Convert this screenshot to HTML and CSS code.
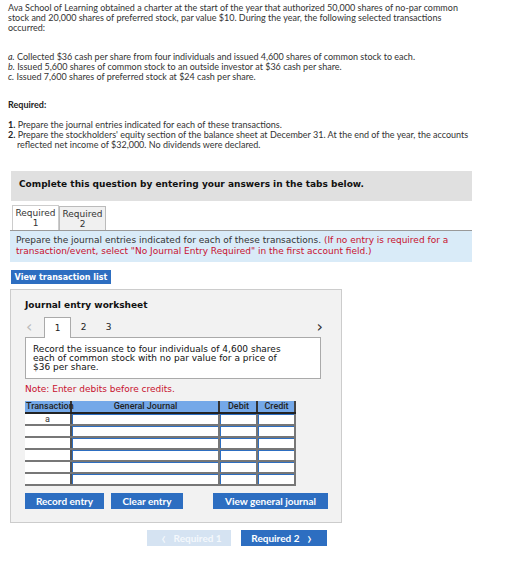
FILE: index.html
```html
<!DOCTYPE html>
<html lang="en">
<head>
  <meta charset="UTF-8" />
  <title>Ava School of Learning - Journal Entries</title>
  <link rel="stylesheet" href="styles.css">
</head>
<body>
  <div class="problem">
    <p>Ava School of Learning obtained a charter at the start of the year that authorized 50,000 shares of no-par common stock and 20,000 shares of preferred stock, par value $10. During the year, the following selected transactions occurred:</p>
    <ol class="events">
      <li><i>a.</i> Collected $36 cash per share from four individuals and issued 4,600 shares of common stock to each.</li>
      <li><i>b.</i> Issued 5,600 shares of common stock to an outside investor at $36 cash per share.</li>
      <li><i>c.</i> Issued 7,600 shares of preferred stock at $24 cash per share.</li>
    </ol>
    <p class="req-title">Required:</p>
    <ol class="reqs">
      <li><b>1.</b> Prepare the journal entries indicated for each of these transactions.</li>
      <li><b>2.</b> Prepare the stockholders' equity section of the balance sheet at December 31. At the end of the year, the accounts reflected net income of $32,000. No dividends were declared.</li>
    </ol>
  </div>

  <div class="answer">
    <div class="banner">Complete this question by entering your answers in the tabs below.</div>

    <div class="tabs">
      <div class="tab active">Required<br>1</div>
      <div class="tab">Required<br>2</div>
    </div>
    <div class="info">
      <div>Prepare the journal entries indicated for each of these transactions. <span class="red">(If no entry is required for a</span></div>
      <div class="red">transaction/event, select "No Journal Entry Required" in the first account field.)</div>
    </div>

    <button class="btn small">View transaction list</button>

    <div class="worksheet">
      <h4>Journal entry worksheet</h4>
      <div class="steps">
        <span class="arrow off">&lsaquo;</span>
        <span class="step current">1</span>
        <span class="step">2</span>
        <span class="step">3</span>
        <span class="arrow next">&rsaquo;</span>
      </div>
      <div class="desc">Record the issuance to four individuals of 4,600 shares each of common stock with no par value for a price of $36 per share.</div>
      <p class="note">Note: Enter debits before credits.</p>

      <table class="journal">
        <thead>
          <tr>
            <th class="c-tr">Transaction</th>
            <th class="c-gj">General Journal</th>
            <th class="c-dr">Debit</th>
            <th class="c-cr">Credit</th>
          </tr>
        </thead>
        <tbody>
          <tr><td class="c-tr">a</td><td class="cell"></td><td class="cell"></td><td class="cell"></td></tr>
          <tr><td class="c-tr"></td><td class="cell"></td><td class="cell"></td><td class="cell"></td></tr>
          <tr><td class="c-tr"></td><td class="cell"></td><td class="cell"></td><td class="cell"></td></tr>
          <tr><td class="c-tr"></td><td class="cell"></td><td class="cell"></td><td class="cell"></td></tr>
          <tr><td class="c-tr"></td><td class="cell"></td><td class="cell"></td><td class="cell"></td></tr>
          <tr><td class="c-tr"></td><td class="cell"></td><td class="cell"></td><td class="cell"></td></tr>
        </tbody>
      </table>

      <div class="actions">
        <button class="btn">Record entry</button>
        <button class="btn">Clear entry</button>
        <button class="btn push">View general journal</button>
      </div>
    </div>

    <div class="pager">
      <button class="btn page disabled"><span class="chev">&lsaquo;</span> Required 1</button>
      <button class="btn page">Required 2 <span class="chev">&rsaquo;</span></button>
    </div>
  </div>
</body>
</html>
```

FILE: styles.css
```css
body {
  margin: 0;
  background: #fff;
  color: #333;
  font-family: Lato, "Liberation Sans", sans-serif;
}

.problem {
  padding: 3px 8px 0 8px;
  font-size: 9px;
  line-height: 10px;
  width: 470px;
}
.problem p,
.problem ol {
  margin: 0;
  padding: 0;
  list-style: none;
}
.events {
  margin-top: 19px !important;
}
.events i {
  font-style: italic;
}
.req-title {
  margin-top: 18px !important;
  font-weight: bold;
  color: #222;
}
.reqs {
  margin-top: 10px !important;
}
.reqs li {
  padding-left: 9px;
  text-indent: -9px;
}
.reqs b {
  font-weight: bold;
  color: #222;
}

.answer {
  margin: 21px 0 0 10px;
  width: 462px;
  font-family: "DejaVu Sans", Verdana, sans-serif;
  font-size: 9px;
  color: #222;
}

.banner {
  background: #e0e0e0;
  margin-left: 1px;
  height: 30px;
  line-height: 27px;
  padding-left: 8px;
  font-weight: bold;
  color: #111;
}

.tabs {
  display: flex;
  margin-top: 4px;
  padding-left: 2px;
  align-items: flex-start;
}
.tab {
  text-align: center;
  line-height: 10px;
  padding: 2px 0 1px;
  width: 45px;
  background: #f0f0f0;
  border: 1px solid #bbb;
  border-bottom: none;
  margin-top: 1px;
  color: #333;
}
.tab.active {
  background: #fff;
  margin-top: 0;
  padding-bottom: 2px;
  border-color: #ccc;
}

.info {
  background: #d9ebf8;
  border-top: 1px solid #999;
  padding: 4px 6px 5px;
  line-height: 11px;
  color: #333;
  white-space: nowrap;
}
.red {
  color: #c8102e;
}

.btn {
  display: block;
  border: none;
  background: #2d6ec1;
  color: #fff;
  font-family: Lato, "Liberation Sans", sans-serif;
  font-weight: bold;
  font-size: 10px;
  padding: 0;
  cursor: pointer;
}
.btn.small {
  margin: 8px 0 0 1px;
  width: 100px;
  height: 14px;
  font-family: "DejaVu Sans", Verdana, sans-serif;
  font-size: 8px;
}

.worksheet {
  margin-top: 5px;
  width: 316px;
  height: 232px;
  background: #f2f2f2;
  border: 1px solid #ccc;
  padding: 0 0 0 14px;
}
.worksheet h4 {
  margin: 10px 0 0;
  font-size: 9px;
  line-height: 10px;
  color: #111;
}

.steps {
  display: flex;
  align-items: flex-end;
  margin: 6px 0 0 1px;
  width: 300px;
  height: 21px;
}
.step {
  width: 25px;
  text-align: center;
  line-height: 20px;
  color: #222;
}
.step.current {
  background: #fff;
  border: 1px solid #aaa;
  border-bottom: none;
  line-height: 20px;
  margin-bottom: -1px;
  position: relative;
  z-index: 1;
}
.arrow {
  font-size: 16px;
  line-height: 18px;
  width: 18px;
  color: #333;
}
.arrow.off {
  color: #bbb;
  align-self: center;
}
.arrow.next {
  margin-left: auto;
  align-self: center;
  text-align: right;
  padding-right: 3px;
}

.desc {
  width: 258px;
  background: #fff;
  border: 1px solid #aaa;
  padding: 7px 29px 6px 7px;
  line-height: 9px;
  height: 27px;
  color: #111;
}

.note {
  margin: 5px 0 0;
  color: #c8102e;
  line-height: 10px;
}

.journal {
  margin-top: 7px;
  border-collapse: collapse;
  width: 271px;
  font-family: Roboto, "Liberation Sans", sans-serif;
  font-size: 9px;
  table-layout: fixed;
}
.journal th {
  background: #74a8e8;
  color: #222;
  height: 11px;
  padding: 0 0 0 1px;
  font-weight: 500;
  border-right: 2px solid #333;
  border-bottom: 2px solid #222;
  line-height: 11px;
  white-space: nowrap;
}
.journal th.c-tr {
  text-align: left;
  overflow: visible;
}
.journal th.c-cr {
  border-right: 2px solid #444;
}
.journal td {
  height: 10px;
  padding: 0;
  border-bottom: 2px solid #777;
  background: #fff;
}
.journal td.c-tr {
  text-align: center;
  color: #333;
  font-size: 9px;
  line-height: 9px;
  border-right: 2px solid #555;
}
.journal td.cell {
  border: 1px solid #8fb4e4;
  border-right: 2px solid #777;
  border-bottom: 2px solid #777;
  box-shadow: inset 1px 1px 0 #2d6ec1;
}
.c-tr { width: 44px; }
.c-dr { width: 35px; }
.c-cr { width: 35px; }

.actions {
  display: flex;
  margin-top: 7px;
  width: 303px;
}
.actions .btn {
  height: 16px;
  margin-right: 7px;
}
.actions .btn:first-child {
  width: 79px;
}
.actions .btn:nth-child(2) {
  width: 72px;
}
.actions .btn.push {
  margin-left: auto;
  margin-right: 0;
  width: 115px;
}

.pager {
  display: flex;
  gap: 10px;
  margin: 7px 0 0 137px;
}
.btn.page {
  height: 16px;
  width: 86px;
  line-height: 16px;
}
.btn.page.disabled {
  width: 84px;
  background: #d5e3f2;
  color: #f4f8fc;
}
.chev {
  font-size: 17px;
  font-weight: normal;
  margin: 0 5px;
  vertical-align: -2px;
  line-height: 10px;
}
```
